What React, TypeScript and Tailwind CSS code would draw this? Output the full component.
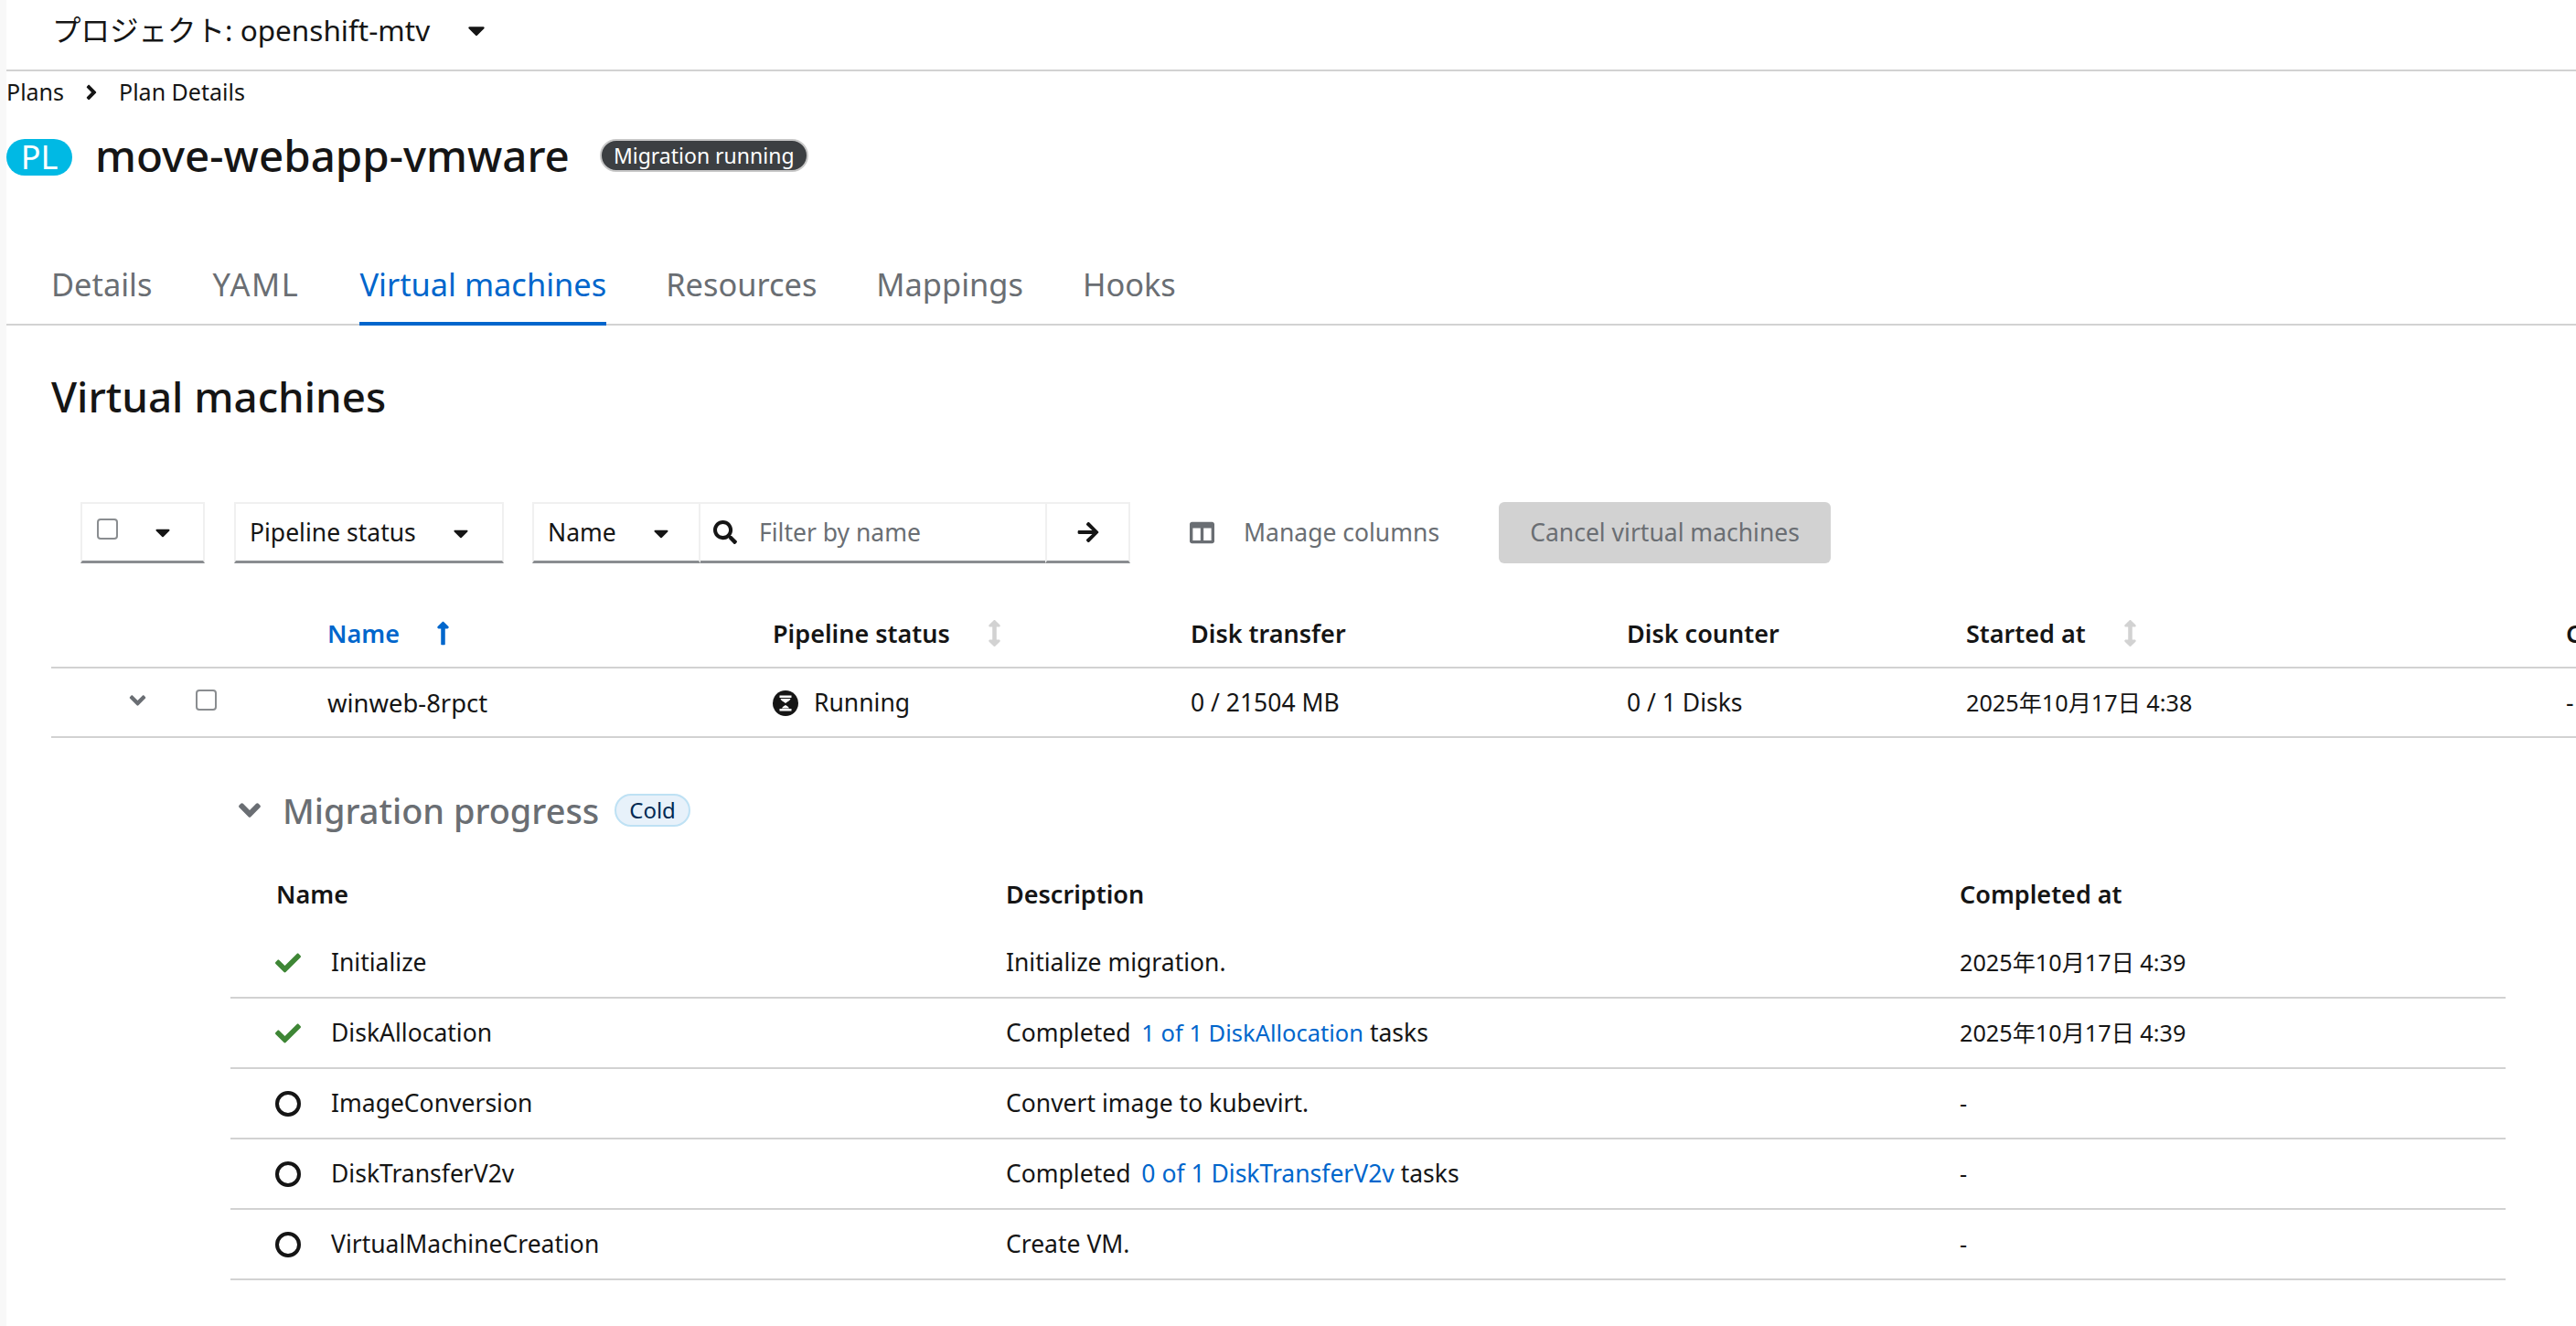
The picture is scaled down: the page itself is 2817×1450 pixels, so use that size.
import { FaAngleDown, FaAngleRight, FaArrowRight, FaArrowsAltV, FaCaretDown, FaCheck, FaColumns, FaLongArrowAltUp, FaSearch } from "react-icons/fa";

const font = "font-['Noto_Sans','Noto_Sans_CJK_JP',sans-serif]";

const tabs = ["Details", "YAML", "Virtual machines", "Resources", "Mappings", "Hooks"];

const steps = [
  { name: "Initialize", done: true, desc: <>Initialize migration.</>, at: "2025年10月17日 4:39" },
  { name: "DiskAllocation", done: true, desc: <>Completed <a className="ml-[5px] text-[25.5px] text-[#0066cc]">1 of 1 DiskAllocation</a> tasks</>, at: "2025年10月17日 4:39" },
  { name: "ImageConversion", done: false, desc: <>Convert image to kubevirt.</>, at: "-" },
  { name: "DiskTransferV2v", done: false, desc: <>Completed <a className="ml-[5px] text-[#0066cc]">0 of 1 DiskTransferV2v</a> tasks</>, at: "-" },
  { name: "VirtualMachineCreation", done: false, desc: <>Create VM.</>, at: "-" },
];

function Checkbox() {
  return <span className="block w-[23px] h-[23px] rounded-[4px] border-2 border-[#8a8d90] bg-white" />;
}

function Hourglass() {
  return (
    <svg viewBox="0 0 28 28" className="w-[28px] h-[28px]">
      <circle cx="14" cy="14" r="14" fill="#151515" />
      <path d="M7.500 5.500h13v2.500h-13zM8.500 9h11c-.5 2-3.500 3.500-5.500 5-2-1.500-5-3-5.500-5zM7.500 20h13v2.500h-13zM10 19.500c.5-1.500 2.500-2.500 4-3.500 1.500 1 3.500 2 4 3.500z" fill="#fff" />
    </svg>
  );
}

function SortHead({ children, active }: { children: string; active?: boolean }) {
  return (
    <div className={`flex items-center font-semibold ${active ? "text-[#0066cc]" : "text-[#151515]"}`}>
      <span>{children}</span>
      {active
        ? <FaLongArrowAltUp className="ml-[33px] text-[29px] -mt-[3px]" />
        : <FaArrowsAltV className="ml-[34px] text-[29px] text-[#d2d2d2] -mt-[3px]" />}
    </div>
  );
}

export default function App() {
  return (
    <div className={`${font} w-[2817px] h-[1450px] overflow-hidden bg-white text-[#151515] text-[26.5px] flex`}>
      <div className="w-[7px] shrink-0 bg-[#f8f8f8]" />
      <div className="flex-1 min-w-0">
        {/* project bar */}
        <div className="h-[78px] border-b-2 border-[#d2d2d2] pl-[50px] flex items-center pb-[10px]">
          <span className="text-[31.5px]">プロジェクト: openshift-mtv</span>
          <FaCaretDown className="ml-[36px] text-[30px]" />
        </div>

        {/* breadcrumb */}
        <div className="h-[46px] flex items-center text-[25px] text-[#151515]">
          <span>Plans</span>
          <FaAngleRight className="mx-[17px] text-[26px]" />
          <span>Plan Details</span>
        </div>

        {/* title */}
        <div className="flex items-center h-[70px] mt-[11px]">
          <span className="w-[72px] h-[40px] mt-[4px] rounded-[20px] bg-[#00b9e4] text-white text-[36px] flex items-center justify-center leading-none">PL</span>
          <h1 className="ml-[25px] text-[47.5px] font-medium leading-none">move-webapp-vmware</h1>
          <span className="ml-[33px] h-[36px] px-[13px] rounded-full bg-[#3c3f42] border-2 border-[#c7c7c7] text-white text-[23px] flex items-center">Migration running</span>
        </div>

        {/* tabs */}
        <div className="mt-[71px] h-[80px] border-b-2 border-[#d2d2d2] pl-[49px] flex gap-[65px] text-[34.4px] text-[#6a6e73]">
          {tabs.map((t) => (
            <div key={t} className={`h-[80px] flex items-center border-b-4 pb-[6px] ${t === "YAML" ? "w-[97px] tracking-[1.6px] pl-[1px]" : ""} ${t === "Virtual machines" ? "text-[#0066cc] border-[#0066cc]" : "border-transparent"}`}>{t}</div>
          ))}
        </div>

        <h2 className="mt-[49px] ml-[49px] text-[45.7px] font-medium leading-[56px]">Virtual machines</h2>

        {/* toolbar */}
        <div className="mt-[88px] ml-[81px] h-[67px] flex items-stretch">
          <div className="w-[136px] border-2 border-[#f0f0f0] border-b-[3px] border-b-[#8a8d90] flex items-center pl-[16px]">
            <span className="-mt-[8px]"><Checkbox /></span>
            <FaCaretDown className="ml-[36px] text-[26px]" />
          </div>
          <div className="ml-[32px] w-[295px] border-2 border-[#f0f0f0] border-b-[3px] border-b-[#8a8d90] flex items-center pl-[15px] pt-[2px]">
            <span>Pipeline status</span>
            <FaCaretDown className="ml-[36px] text-[26px]" />
          </div>
          <div className="ml-[31px] w-[184px] border-2 border-[#f0f0f0] border-b-[3px] border-b-[#8a8d90] flex items-center pl-[15px] pt-[2px]">
            <span>Name</span>
            <FaCaretDown className="ml-[36px] text-[26px]" />
          </div>
          <div className="w-[377px] border-t-2 border-[#f0f0f0] border-b-[3px] border-b-[#8a8d90] flex items-center pl-[14px] text-[#6a6e73]">
            <FaSearch className="text-[26px] text-[#151515]" />
            <span className="ml-[24px] pt-[2px]">Filter by name</span>
          </div>
          <div className="w-[93px] border-2 border-[#f0f0f0] border-b-[3px] border-b-[#8a8d90] flex items-center justify-center">
            <FaArrowRight className="text-[26px]" />
          </div>
          <div className="ml-[65px] flex items-center text-[#6a6e73]">
            <FaColumns className="text-[27px]" />
            <span className="ml-[32px]">Manage columns</span>
          </div>
          <div className="ml-[65px] w-[363px] rounded-[6px] bg-[#d2d2d2] text-[#6a6e73] flex items-center justify-center">Cancel virtual machines</div>
        </div>

        {/* vm table */}
        <div className="mt-[40px] ml-[49px]">
          <div className="h-[75px] pt-[2px] border-b-2 border-[#d2d2d2] grid grid-cols-[302px_487px_457px_477px_371px_656px_400px] items-center text-[27px]">
            <div />
            <SortHead active>Name</SortHead>
            <SortHead>Pipeline status</SortHead>
            <div className="font-semibold">Disk transfer</div>
            <div className="font-semibold">Disk counter</div>
            <SortHead>Started at</SortHead>
            <div className="font-semibold whitespace-nowrap">Completed at</div>
          </div>
          <div className="h-[76px] pt-[2px] border-b-2 border-[#d2d2d2] grid grid-cols-[302px_487px_457px_477px_371px_656px_400px] items-center">
            <div className="flex items-center pl-[85px] -mt-[6px]">
              <FaAngleDown className="text-[28px] w-[19px] text-[#6a6e73]" />
              <span className="ml-[54px] -mt-[2px]"><Checkbox /></span>
            </div>
            <div className="text-[27.4px]">winweb-8rpct</div>
            <div className="flex items-center">
              <Hourglass />
              <span className="ml-[17px]">Running</span>
            </div>
            <div>0 / 21504 MB</div>
            <div>0 / 1 Disks</div>
            <div className="text-[25.2px]">2025年10月17日 4:38</div>
            <div>-</div>
          </div>

          {/* migration progress */}
          <div className="ml-[196px] w-[2488px]">
            <div className="mt-[54px] h-[50px] flex items-center">
              <FaAngleDown className="text-[38px] text-[#6a6e73] ml-[2px]" />
              <span className="ml-[17px] text-[37.9px] font-medium text-[#6a6e73]">Migration progress</span>
              <span className="ml-[17px] h-[36px] px-[14px] rounded-full bg-[#e7f1fa] border-2 border-[#bee1f4] text-[#002952] text-[24px] flex items-center">Cold</span>
            </div>
            <div className="mt-[47px] h-[57px] grid grid-cols-[848px_1043px_1fr] items-start font-semibold text-[27px]">
              <div className="pl-[50px]">Name</div>
              <div>Description</div>
              <div>Completed at</div>
            </div>
            {steps.map((s) => (
              <div key={s.name} className="h-[77px] border-b-2 border-[#d2d2d2] grid grid-cols-[848px_1043px_1fr] items-center">
                <div className="pl-[49px] flex items-center">
                  <span className="w-[28px] flex justify-center">
                    {s.done
                      ? <FaCheck className="text-[28px] text-[#3e8635]" />
                      : <span className="block w-[28px] h-[28px] rounded-full border-[4px] border-[#151515]" />}
                  </span>
                  <span className="ml-[33px]">{s.name}</span>
                </div>
                <div>{s.desc}</div>
                <div className="text-[25.2px]">{s.at}</div>
              </div>
            ))}
          </div>
        </div>
      </div>
    </div>
  );
}
